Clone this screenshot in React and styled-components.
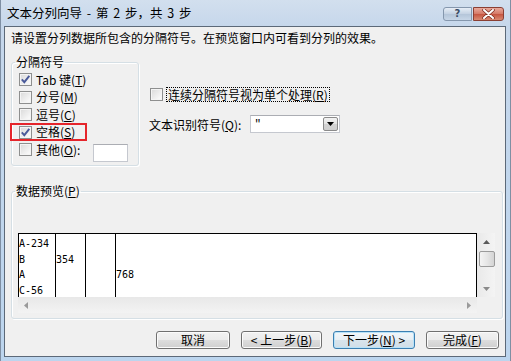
import React from "react";
import styled, { createGlobalStyle } from "styled-components";

const GlobalStyle = createGlobalStyle`
  html, body {
    margin: 0;
    padding: 0;
    background: #bdd4ec;
  }
  body {
    font-family: "Noto Sans CJK SC", "Liberation Sans", sans-serif;
    font-size: 12px;
    color: #000;
  }
  * {
    box-sizing: border-box;
  }
`;

const delimiters = [
  { label: "Tab 键", key: "T", checked: true },
  { label: "分号", key: "M" },
  { label: "逗号", key: "C" },
  { label: "空格", key: "S", checked: true, marked: true },
  { label: "其他", key: "O", other: true },
];

const previewRows = [
  ["A-234", "", "", ""],
  ["B", "354", "", ""],
  ["A", "", "", "768"],
  ["C-56", "", "", ""],
];

const columnWidths = ["37px", "30px", "30px", "1fr"];

function CheckBox({ checked }) {
  return (
    <Box>
      {checked && (
        <svg width="11" height="11" viewBox="0 0 11 11">
          <path
            d="M1.8 5.4 L4.3 8.2 L9.3 1.8"
            fill="none"
            stroke="#4a5a9a"
            strokeWidth="1.9"
          />
        </svg>
      )}
    </Box>
  );
}

function Arrow({ dir, color = "#5a5a5a" }) {
  const paths = {
    up: "M0 4 L3.5 0 L7 4 Z",
    down: "M0 0 L7 0 L3.5 4 Z",
    left: "M4 0 L4 7 L0 3.5 Z",
    right: "M0 0 L4 3.5 L0 7 Z",
  };
  const horizontal = dir === "left" || dir === "right";
  return (
    <svg
      width={horizontal ? 4 : 7}
      height={horizontal ? 7 : 4}
      viewBox={horizontal ? "0 0 4 7" : "0 0 7 4"}
    >
      <path d={paths[dir]} fill={color} />
    </svg>
  );
}

function Key({ k }) {
  return (
    <>
      (<u>{k}</u>)
    </>
  );
}

export default function App() {
  return (
    <>
      <GlobalStyle />
      <Window>
        <TitleBar>
          <Title>文本分列向导 - 第 2 步，共 3 步</Title>
          <CaptionButtons>
            <HelpButton>?</HelpButton>
            <CloseButton>
              <svg width="13" height="10" viewBox="0 0 13 10">
                <path
                  d="M2 1 L11 9 M11 1 L2 9"
                  stroke="#7a2a1e"
                  strokeWidth="3.4"
                  strokeLinecap="round"
                />
                <path
                  d="M2 1 L11 9 M11 1 L2 9"
                  stroke="#fff"
                  strokeWidth="2"
                  strokeLinecap="round"
                />
              </svg>
            </CloseButton>
          </CaptionButtons>
        </TitleBar>

        <Client>
          <Instruction>
            请设置分列数据所包含的分隔符号。在预览窗口内可看到分列的效果。
          </Instruction>

          <TopRow>
            <Group $width={128} $height={111}>
              <GroupTitle>分隔符号</GroupTitle>
              <DelimiterList>
                {delimiters.map((d) => (
                  <DelimiterRow key={d.key}>
                    {d.marked && <Highlight />}
                    <CheckBox checked={d.checked} />
                    <RowLabel>
                      {d.label}
                      <Key k={d.key} />
                      {d.other && ":"}
                    </RowLabel>
                    {d.other && <OtherInput />}
                  </DelimiterRow>
                ))}
              </DelimiterList>
            </Group>

            <Options>
              <OptionRow>
                <CheckBox />
                <FocusLabel>
                  连续分隔符号视为单个处理<Key k="R" />
                </FocusLabel>
              </OptionRow>
              <QualifierRow>
                <span>
                  文本识别符号<Key k="Q" />:
                </span>
                <Combo>
                  <ComboValue>"</ComboValue>
                  <ComboButton>
                    <Arrow dir="down" color="#000" />
                  </ComboButton>
                </Combo>
              </QualifierRow>
            </Options>
          </TopRow>

          <Group $width={492} $height={135} $gap={18}>
            <GroupTitle>数据预览<Key k="P" /></GroupTitle>
            <PreviewArea>
              <PreviewTable>
                {columnWidths.map((w, ci) => (
                  <PreviewColumn key={ci} $last={ci === columnWidths.length - 1}>
                    {previewRows.map((row, ri) => (
                      <PreviewCell key={ri}>{row[ci]}</PreviewCell>
                    ))}
                  </PreviewColumn>
                ))}
              </PreviewTable>
              <VScroll>
                <ScrollArrow>
                  <Arrow dir="up" />
                </ScrollArrow>
                <Thumb />
                <ScrollSpace />
                <ScrollArrow>
                  <Arrow dir="down" color="#8a8a8a" />
                </ScrollArrow>
              </VScroll>
              <HScroll>
                <Arrow dir="left" color="#9a9a9a" />
                <Arrow dir="right" color="#9a9a9a" />
              </HScroll>
            </PreviewArea>
          </Group>

          <ButtonRow>
            <Button $width={74}>取消</Button>
            <Button $width={81}>
              &lt; 上一步<Key k="B" />
            </Button>
            <Button $width={82} $focused>
              下一步<Key k="N" /> &gt;
            </Button>
            <Button $width={73}>
              完成<Key k="F" />
            </Button>
          </ButtonRow>
        </Client>
      </Window>
    </>
  );
}

const Window = styled.div`
  width: 511px;
  height: 361px;
  display: flex;
  flex-direction: column;
  padding: 0 4px 4px 3px;
  background: linear-gradient(#d2dfee, #c6d7eb 26px, #bcd5ee);
  border-left: 1px solid #7f8fa3;
  border-right: 1px solid #7f8fa3;
`;

const TitleBar = styled.div`
  height: 26px;
  display: flex;
  align-items: center;
  justify-content: space-between;
  padding: 0 2px 0 3px;
`;

const Title = styled.div`
  font-size: 12.5px;
  line-height: 14px;
  word-spacing: 2px;
  color: #000;
`;

const CaptionButtons = styled.div`
  display: flex;
  gap: 1px;
  height: 14px;
  margin-top: 1px;
`;

const HelpButton = styled.div`
  width: 29px;
  display: flex;
  align-items: center;
  justify-content: center;
  border: 1px solid #8597ad;
  border-radius: 3px 0 0 3px;
  background: linear-gradient(#e6edf6, #c3d1e2 50%, #b4c5d9 51%, #c7d6e7);
  color: #3b4d66;
  font-family: "DejaVu Sans", sans-serif;
  font-size: 10px;
  font-weight: bold;
  line-height: 12px;
`;

const CloseButton = styled.div`
  width: 31px;
  display: flex;
  align-items: center;
  justify-content: center;
  border: 1px solid #8a3f33;
  border-radius: 0 3px 3px 0;
  background: linear-gradient(#e9a99c, #d47865 50%, #c5533f 51%, #d98a72);
`;

const Client = styled.div`
  flex: 1;
  display: flex;
  flex-direction: column;
  border: 1px solid #5c6978;
  background: #f0f0f0;
  padding: 4px 4px 0 6px;
`;

const Instruction = styled.div`
  line-height: 14px;
`;

const TopRow = styled.div`
  display: flex;
  align-items: flex-start;
  margin-top: 10px;
`;

const Group = styled.fieldset`
  margin: ${(p) => p.$gap || 0}px 0 0 0;
  padding: 0 3px;
  width: ${(p) => p.$width}px;
  height: ${(p) => p.$height}px;
  min-width: 0;
  border: 1px solid #d5dfe5;
  border-radius: 3px;
  box-shadow: inset 1px 1px 0 #fff, 1px 1px 0 #fff;
`;

const GroupTitle = styled.legend`
  padding: 0 1px;
  line-height: 14px;
`;

const DelimiterList = styled.div`
  margin-top: 2px;
  padding-left: 4px;
`;

const DelimiterRow = styled.div`
  position: relative;
  display: flex;
  align-items: center;
  height: 17.5px;
`;

const Highlight = styled.div`
  position: absolute;
  left: -9px;
  top: -1px;
  width: 77px;
  height: 18px;
  border: 2px solid #e5252b;
`;

const Box = styled.span`
  flex: none;
  width: 13px;
  height: 13px;
  display: flex;
  border: 1px solid #8e8f8f;
  background: linear-gradient(135deg, #d9d9d9, #f7f7f7 80%);
  box-shadow: inset 0 0 0 1px #f4f4f4;
`;

const RowLabel = styled.span`
  margin-left: 4px;
  line-height: 14px;
  white-space: nowrap;
`;

const OtherInput = styled.div`
  align-self: flex-start;
  margin: 3px 0 0 13px;
  width: 35px;
  height: 18px;
  flex: none;
  background: #fff;
  border: 1px solid #c5c8cf;
  border-top-color: #abadb3;
`;

const Options = styled.div`
  display: flex;
  flex-direction: column;
  margin-left: 10px;
  padding-top: 32px;
`;

const OptionRow = styled.div`
  display: flex;
  align-items: center;
  height: 15px;
  padding-left: 1px;
`;

const FocusLabel = styled.span`
  margin-left: 3px;
  padding: 0 1px 0 1px;
  line-height: 13px;
  border: 1px dotted #000;
  white-space: nowrap;
`;

const QualifierRow = styled.div`
  display: flex;
  align-items: center;
  height: 18px;
  margin-top: 13px;
  white-space: nowrap;
`;

const Combo = styled.div`
  display: flex;
  width: 90px;
  height: 18px;
  margin-left: 9px;
  padding: 1px;
  background: #fff;
  border: 1px solid #c5c8cf;
  border-top-color: #abadb3;
`;

const ComboValue = styled.span`
  flex: 1;
  padding-left: 2px;
  font-family: "Liberation Mono", monospace;
  font-size: 11px;
  line-height: 14px;
`;

const ComboButton = styled.span`
  width: 15px;
  display: flex;
  align-items: center;
  justify-content: center;
  border: 1px solid #8b8b8b;
  border-radius: 2px;
  background: linear-gradient(#f3f3f3, #e3e3e3 50%, #d3d3d3 51%, #cfcfcf);
`;

const PreviewArea = styled.div`
  display: grid;
  grid-template-columns: 459px 18px;
  grid-template-rows: 64px 16px;
  margin: 35px 0 0 3px;
`;

const PreviewTable = styled.div`
  display: grid;
  grid-template-columns: ${columnWidths.join(" ")};
  background: #fff;
  border: 1px solid #000;
  border-bottom: none;
  padding-top: 2px;
  overflow: hidden;
  font-family: "DejaVu Sans Mono", "Liberation Mono", monospace;
  font-size: 10px;
`;

const PreviewColumn = styled.div`
  border-right: ${(p) => (p.$last ? "none" : "1px solid #000")};
  margin-top: -2px;
  padding-top: 2px;
`;

const PreviewCell = styled.div`
  height: 15.5px;
  line-height: 15.5px;
  white-space: nowrap;
`;

const VScroll = styled.div`
  display: flex;
  flex-direction: column;
  align-items: center;
  padding-left: 1px;
  background: linear-gradient(90deg, #e9e9e9, #f4f4f4);
`;

const ScrollArrow = styled.div`
  height: 17px;
  width: 100%;
  display: flex;
  align-items: center;
  justify-content: center;
`;

const Thumb = styled.div`
  width: 16px;
  height: 16px;
  margin-top: 1px;
  border: 1px solid #9b9b9b;
  border-radius: 2px;
  background: linear-gradient(90deg, #f4f4f4, #e6e6e6 50%, #d4d4d4);
`;

const ScrollSpace = styled.div`
  flex: 1;
`;

const HScroll = styled.div`
  display: flex;
  align-items: center;
  justify-content: space-between;
  padding: 0 6px 0 6px;
  background: linear-gradient(#e8e8e8, #f3f3f3);
`;

const ButtonRow = styled.div`
  display: flex;
  justify-content: flex-end;
  gap: 11px;
  margin-top: 12px;
  padding-right: 2px;
`;

const Button = styled.div`
  width: ${(p) => p.$width}px;
  height: 18px;
  display: flex;
  align-items: center;
  justify-content: center;
  line-height: 14px;
  white-space: nowrap;
  border: 1px solid ${(p) => (p.$focused ? "#3c7fb1" : "#707070")};
  border-radius: 3px;
  background: ${(p) =>
    p.$focused
      ? "linear-gradient(#f2f6f9, #e8eff4 50%, #d8e4ec 51%, #d1dee8)"
      : "linear-gradient(#f2f2f2, #ebebeb 50%, #dddddd 51%, #cfcfcf)"};
  box-shadow: inset 0 0 0 1px
    ${(p) => (p.$focused ? "#b8e2f8" : "#fbfbfb")};
`;
